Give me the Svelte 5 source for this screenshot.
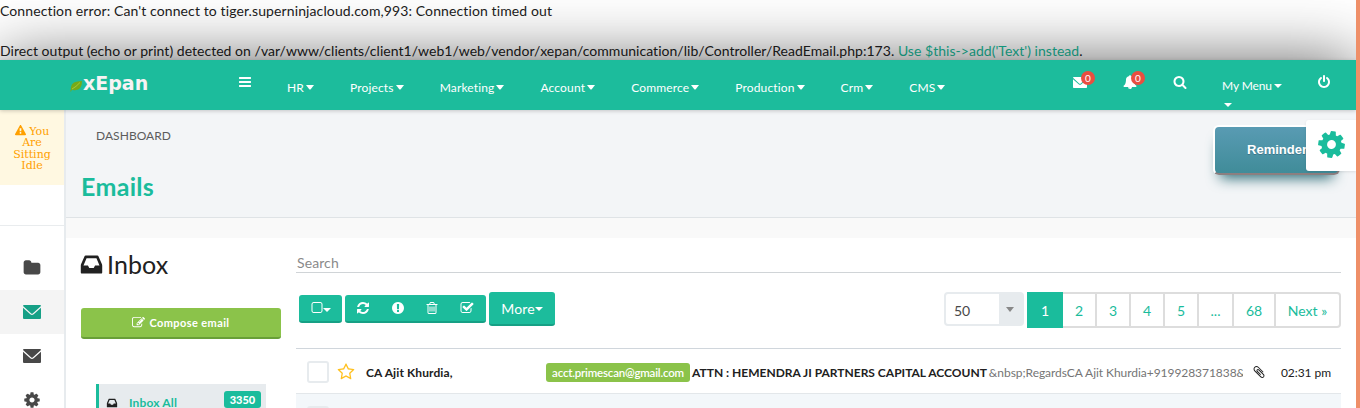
<script>
  const icons = {
    bars: 'M1664 1344v128q0 26-19 45t-45 19h-1408q-26 0-45-19t-19-45v-128q0-26 19-45t45-19h1408q26 0 45 19t19 45zm0-512v128q0 26-19 45t-45 19h-1408q-26 0-45-19t-19-45v-128q0-26 19-45t45-19h1408q26 0 45 19t19 45zm0-512v128q0 26-19 45t-45 19h-1408q-26 0-45-19t-19-45v-128q0-26 19-45t45-19h1408q26 0 45 19t19 45z',
    search: 'M1216 832q0-185-131.5-316.5t-316.5-131.5-316.5 131.5-131.5 316.5 131.5 316.5 316.5 131.5 316.5-131.5 131.5-316.5zm512 832q0 52-38 90t-90 38q-54 0-90-38l-343-342q-179 124-399 124-143 0-273.5-55.5t-225-150-150-225-55.5-273.5 55.5-273.5 150-225 225-150 273.5-55.5 273.5 55.5 225 150 150 225 55.5 273.5q0 220-124 399l343 343q37 37 37 90z',
    power: 'M1664 896q0 156-61 298t-164 245-245 164-298 61-298-61-245-164-164-245-61-298q0-182 80.5-343t226.5-270q43-32 95.5-25t83.5 50q32 42 24.5 94.5t-49.5 84.5q-98 74-151.5 181t-53.5 228q0 104 40.5 198.5t109.5 163.5 163.5 109.5 198.5 40.5 198.5-40.5 163.5-109.5 109.5-163.5 40.5-198.5q0-121-53.5-228t-151.5-181q-42-32-49.5-84.5t24.5-94.5q31-43 84-50t95 25q146 109 226.5 270t80.5 343zm-640-768v640q0 52-38 90t-90 38-90-38-38-90v-640q0-52 38-90t90-38 90 38 38 90z',
    cog: 'M1152 896q0-106-75-181t-181-75-181 75-75 181 75 181 181 75 181-75 75-181zm512-109v222q0 12-8 23t-20 13l-185 28q-19 54-39 91 35 50 107 138 10 12 10 25t-9 23q-27 37-99 108t-94 71q-12 0-26-9l-138-108q-44 23-91 38-16 136-29 186-7 28-36 28h-222q-14 0-24.5-8.5t-11.5-21.5l-28-184q-49-16-90-37l-141 107q-10 9-25 9-14 0-25-11-126-114-165-168-7-10-7-23 0-12 8-23 15-21 51-66.500t54-70.500q-27-50-41-99l-183-27q-13-2-21-12.500t-8-23.500v-222q0-12 8-23t19-13l186-28q14-46 39-92-40-57-107-138-10-12-10-24 0-10 9-23 26-36 98.500-107.500t94.500-71.500q13 0 26 10l138 107q44-23 91-38 16-136 29-186 7-28 36-28h222q14 0 24.500 8.500t11.500 21.500l28 184q49 16 90 37l142-107q9-9 24-9 13 0 25 10 129 119 165 170 7 8 7 22 0 12-8 23-15 21-51 66.500t-54 70.500q26 50 41 98l183 28q13 2 21 12.500t8 23.500z',
    refresh: 'M1639 1056q0 5-1 7-64 268-268 434.500t-478 166.500q-146 0-282.500-55t-243.500-157l-129 129q-19 19-45 19t-45-19-19-45v-448q0-26 19-45t45-19h448q26 0 45 19t19 45-19 45l-137 137q71 66 161 102t187 36q134 0 250-65t186-179q11-17 53-117 8-23 30-23h192q13 0 22.500 9.500t9.500 22.500zm25-800v448q0 26-19 45t-45 19h-448q-26 0-45-19t-19-45 19-45l138-138q-148-137-349-137-134 0-250 65t-186 179q-11 17-53 117-8 23-30 23h-199q-13 0-22.500-9.500t-9.500-22.500v-7q65-268 270-434.500t480-166.500q146 0 284 55.500t245 156.500l130-129q19-19 45-19t45 19 19 45z',
    alert: 'M896 128q209 0 385.500 103t279.500 279.500 103 385.500-103 385.500-279.500 279.500-385.500 103-385.500-103-279.500-279.500-103-385.500 103-385.500 279.500-279.500 385.500-103zm128 1247v-190q0-14-9-23.500t-22-9.500h-192q-13 0-23 10t-10 23v190q0 13 10 23t23 10h192q13 0 22-9.500t9-23.500zm-2-344l18-621q0-12-10-18-10-8-24-8h-220q-14 0-24 8-10 6-10 18l17 621q0 10 10 17.500t24 7.500h185q14 0 23.500-7.500t10.500-17.500z',
    trash: 'M704 736v576q0 14-9 23t-23 9h-64q-14 0-23-9t-9-23v-576q0-14 9-23t23-9h64q14 0 23 9t9 23zm256 0v576q0 14-9 23t-23 9h-64q-14 0-23-9t-9-23v-576q0-14 9-23t23-9h64q14 0 23 9t9 23zm256 0v576q0 14-9 23t-23 9h-64q-14 0-23-9t-9-23v-576q0-14 9-23t23-9h64q14 0 23 9t9 23zm128 724v-948h-896v948q0 22 7 40.500t14.500 27 10.500 8.500h832q3 0 10.500-8.500t14.500-27 7-40.500zm-672-1076h448l-48-117q-7-9-17-11h-317q-10 2-17 11zm928 32v64q0 14-9 23t-23 9h-96v948q0 83-47 143.500t-113 60.500h-832q-66 0-113-58.500t-47-141.500v-952h-96q-14 0-23-9t-9-23v-64q0-14 9-23t23-9h309l70-167q15-37 54-63t79-26h320q40 0 79 26t54 63l70 167h309q14 0 23 9t9 23z',
    check: 'M1472 930v318q0 119-84.500 203.500t-203.500 84.500h-832q-119 0-203.500-84.500t-84.500-203.500v-832q0-119 84.500-203.500t203.500-84.500h832q63 0 117 25 15 7 18 23 3 17-9 29l-49 49q-10 10-23 10-3 0-9-2-23-6-45-6h-832q-66 0-113 47t-47 113v832q0 66 47 113t113 47h832q66 0 113-47t47-113v-254q0-13 9-22l64-64q10-10 23-10 6 0 12 3 20 8 20 29zm231-489l-814 814q-24 24-57 24t-57-24l-430-430q-24-24-24-57t24-57l110-110q24-24 57-24t57 24l263 263 647-647q24-24 57-24t57 24l110 110q24 24 24 57t-24 57z',
    square: 'M1312 256h-832q-66 0-113 47t-47 113v832q0 66 47 113t113 47h832q66 0 113-47t47-113v-832q0-66-47-113t-113-47zm288 160v832q0 119-84.500 203.500t-203.500 84.500h-832q-119 0-203.500-84.500t-84.500-203.500v-832q0-119 84.500-203.500t203.500-84.500h832q119 0 203.500 84.500t84.500 203.500z',
    bell: 'M912 1696q0-16-16-16-59 0-101.500-42.500t-42.500-101.500q0-16-16-16t-16 16q0 73 51.500 124.500t124.500 51.500q16 0 16-16zm816-288q0 52-38 90t-90 38h-448q0 106-75 181t-181 75-181-75-75-181h-448q-52 0-90-38t-38-90q50-42 91-88t85-119.500 74.500-158.500 50-206 19.500-260q0-152 117-282.500t307-158.500q-8-19-8-39 0-40 28-68t68-28 68 28 28 68q0 20-8 39 190 28 307 158.500t117 282.500q0 139 19.500 260t50 206 74.500 158.500 85 119.500 91 88z',
    star: 'M1201 1004l306-297-422-62-189-382-189 382-422 62 306 297-73 421 378-199 377 199zm527-357q0 22-26 48l-363 354 86 500q1 7 1 20 0 50-41 50-19 0-40-12l-449-236-449 236q-22 12-40 12-21 0-31.500-14.500t-10.500-35.500q0-6 2-20l86-500-364-354q-25-27-25-48 0-37 56-46l502-73 225-455q19-41 49-41t49 41l225 455 502 73q56 9 56 46z',
    inbox: 'M1151 960h316q-1-3-2.500-8t-2.500-8l-212-496h-708l-212 496q-1 2-2.500 8t-2.500 8h316l95 192h320zm513 30v482q0 26-19 45t-45 19h-1408q-26 0-45-19t-19-45v-482q0-62 25-123l238-552q10-25 36.500-42t52.500-17h832q26 0 52.500 17t36.500 42l238 552q25 61 25 123z',
    clip: 'M1596 1385q0 117-79 196t-196 79q-135 0-235-100l-777-776q-113-115-113-271 0-159 110-270t269-111q158 0 273 113l605 606q10 10 10 22 0 16-30.500 46.500t-46.500 30.500q-13 0-23-10l-606-607q-79-77-181-77-106 0-179 75t-73 181q0 105 76 181l776 777q63 63 145 63 64 0 106-42t42-106q0-82-63-145l-581-581q-26-24-60-24-29 0-48 19t-19 48q0 32 25 59l410 410q10 10 10 22 0 16-31 47t-47 31q-12 0-22-10l-410-410q-63-61-63-149 0-82 57-139t139-57q88 0 149 63l581 581q100 98 100 235z',
    edit: 'M888 1184l116-116-152-152-116 116v56h96v96h56zm440-720q-16-16-33 1l-350 350q-17 17-1 33t33-1l350-350q17-17 1-33zm80 594v190q0 119-84.500 203.500t-203.500 84.500h-832q-119 0-203.500-84.500t-84.500-203.500v-832q0-119 84.500-203.500t203.500-84.500h832q63 0 117 25 15 7 18 23 3 17-9 29l-49 49q-14 14-32 8-23-6-45-6h-832q-66 0-113 47t-47 113v832q0 66 47 113t113 47h832q66 0 113-47t47-113v-126q0-13 9-22l64-64q15-15 35-7t20 29zm-96-738l288 288-672 672h-288v-288zm444 132l-92 92-288-288 92-92q28-28 68-28t68 28l152 152q28 28 28 68t-28 68z',
    warning: 'M1024 1375v-190q0-14-9.500-23.500t-22.500-9.500h-192q-13 0-22.500 9.500t-9.500 23.500v190q0 14 9.500 23.500t22.500 9.500h192q13 0 22.500-9.500t9.500-23.500zm-2-374l18-459q0-12-10-19-13-11-24-11h-220q-11 0-24 11-10 7-10 21l17 457q0 10 10 16.500t24 6.500h185q14 0 23.500-6.500t10.500-16.500zm-14-934l768 1408q35 63-2 126-17 29-46.500 46t-63.500 17h-1536q-34 0-63.500-17t-46.500-46q-37-63-2-126l768-1408q17-31 47-49t65-18 65 18 47 49z',
    folder: 'M1728 608v704q0 92-66 158t-158 66h-1216q-92 0-158-66t-66-158v-960q0-92 66-158t158-66h320q92 0 158 66t66 158v32h672q92 0 158 66t66 158z'
  };
  const menu = ['HR', 'Projects', 'Marketing', 'Account', 'Commerce', 'Production', 'Crm', 'CMS'];
  const pages = [['1', 36], ['2', 34], ['3', 34], ['4', 34], ['5', 34], ['...', 35], ['68', 42], ['Next »', 65]];
</script>

{#snippet icon(name, size)}
  <svg class="icon" width={size} height={size} viewBox="0 0 1792 1792"><path d={icons[name]} /></svg>
{/snippet}

{#snippet mail(w, h)}
  <svg class="icon" width={w} height={h} viewBox="0 0 18 14">
    <path d="M1 0h16q1 0 1 1L9.700 8.500Q9 9 8.300 8.500L0 1Q0 0 1 0zM0 2.700l7.300 6.500q1.700 1.400 3.400 0L18 2.700V13q0 1-1 1H1q-1 0-1-1z" />
  </svg>
{/snippet}

<div class="screen">
  <div class="main">
    <div class="notice">
      <p class="error">Connection error: Can't connect to tiger.superninjacloud.com,993: Connection timed out</p>
      <p>Direct output (echo or print) detected on /var/www/clients/client1/web1/web/vendor/xepan/communication/lib/Controller/ReadEmail.php:173. <a href="#add">Use $this-&gt;add('Text') instead</a>.</p>
    </div>

    <div class="app">
      <header>
        <div class="logo">
          <svg width="13" height="12" viewBox="0 0 13 12">
            <path d="M.3 11.500Q1 9 1 7Q1.500 1 12 1Q12 10 5 10.300Q3 10.500 2 9.500L1 11.500z" fill="#76aa18" />
            <path d="M2 9Q6 7 10 2.500" stroke="#a6c83a" stroke-width="1" fill="none" />
          </svg>
          <span>xEpan</span>
        </div>
        <div class="burger">{@render icon('bars', 14)}</div>
        <nav>
          {#each menu as m}
            <a href="#nav">{m}<svg class="caret" width="8" height="5" viewBox="0 0 8 5"><path d="M0 0h8L4.500 4.500h-1z" /></svg></a>
          {/each}
        </nav>
        <div class="tools">
          <div class="tool mailtool">{@render mail(14, 11)}<b>0</b></div>
          <div class="tool belltool">{@render icon('bell', 14)}<b>0</b></div>
          <div class="tool searchtool">{@render icon('search', 14)}</div>
          <div class="mymenu">
            <div>My Menu <svg width="8" height="4" viewBox="0 0 8 4"><path d="M0 0h8L4 4z" /></svg></div>
            <svg class="second" width="8" height="4" viewBox="0 0 8 4"><path d="M0 0h8L4 4z" /></svg>
          </div>
          <div class="tool">{@render icon('power', 14)}</div>
        </div>
      </header>

      <div class="body">
        <aside>
          <div class="idle">{@render icon('warning', 11)} You<br />Are<br />Sitting<br />Idle</div>
          <div class="gap"></div>
          <div class="side">{@render icon('folder', 18)}</div>
          <div class="side on">{@render mail(18, 14)}</div>
          <div class="side">{@render mail(18, 14)}</div>
          <div class="side">{@render icon('cog', 18)}</div>
        </aside>

        <div class="page">
          <div class="head">
            <div class="crumb">DASHBOARD</div>
            <h1>Emails</h1>
            <button class="reminder">Reminder</button>
            <div class="config">
              <svg width="31" height="31" viewBox="0 0 1792 1792"><path transform="rotate(8 896 896)" d={icons.cog} /></svg>
            </div>
          </div>

          <div class="content">
            <div class="left">
              <h2>{@render icon('inbox', 25)}<span>Inbox</span></h2>
              <button class="compose">{@render icon('edit', 13)}<span>Compose email</span></button>
              <div class="box">
                {@render icon('inbox', 12)}<span>Inbox All</span><b>3350</b>
              </div>
            </div>

            <div class="right">
              <div class="search">Search</div>
              <div class="bar">
                <button class="btn select">{@render icon('square', 14)}<svg width="8" height="4" viewBox="0 0 8 4"><path d="M0 0h8L4 4z" /></svg></button>
                <div class="btn group">
                  {@render icon('refresh', 14)}{@render icon('alert', 14)}{@render icon('trash', 14)}{@render icon('check', 14)}
                </div>
                <button class="btn more">More<svg width="8" height="4" viewBox="0 0 8 4"><path d="M0 0h8L4 4z" /></svg></button>
                <div class="count"><span>50</span><i><svg width="8" height="5" viewBox="0 0 8 5"><path d="M0 0h8L4 5z" /></svg></i></div>
                <div class="pager">
                  {#each pages as [label, w], i}
                    <a href="#page" class:active={i === 0} style="width:{w}px">{label}</a>
                  {/each}
                </div>
              </div>
              <div class="row">
                <span class="box-check"></span>
                <span class="star">{@render icon('star', 18)}</span>
                <strong class="from">CA Ajit Khurdia,</strong>
                <div class="subject"><em>acct.primescan@gmail.com</em><strong>ATTN : HEMENDRA JI PARTNERS CAPITAL ACCOUNT</strong><span>&amp;nbsp;RegardsCA Ajit Khurdia+919928371838&amp;nbsp;</span></div>
                <span class="clip">{@render icon('clip', 14)}</span>
                <time>02:31 pm</time>
              </div>
              <div class="row alt"><span class="box-check"></span></div>
            </div>
          </div>
        </div>
      </div>
    </div>
  </div>
</div>

<style>
  :global(body) { overflow: hidden; }
  .screen { box-sizing: border-box; width: 1360px; height: 408px; overflow: hidden; border-right: 4px solid #ef8f68; background: #fff; font: 14px/20px Lato, sans-serif; color: #212121; font-variant-ligatures: none; }
  .screen :global(*) { box-sizing: border-box; }
  .main { width: 1356px; height: 408px; overflow: hidden; }
  svg { display: block; fill: currentColor; flex: none; }
  a { color: #1abc9c; text-decoration: none; }
  button { font: inherit; border: 0; padding: 0; color: #fff; }
  .notice { height: 60px; white-space: nowrap; }
  .notice p { margin: 0 0 20px; height: 20px; padding-top: 1px; letter-spacing: .033px; }
  .notice .error { letter-spacing: .11px; }
  .app { height: 600px; box-shadow: 0 0 60px rgba(0, 0, 0, .6); position: relative; background: #fff; }
  header { position: relative; z-index: 2; height: 50px; background: #1cbc9c; color: #fff; display: flex; box-shadow: 0 1px 4px rgba(0, 0, 0, .2); font-size: 12px; }
  .logo { width: 238px; padding: 11px 0 0 70px; display: flex; }
  .logo svg { margin: 9px 0 0; }
  .logo span { font: bold 19px/24px "DejaVu Sans", sans-serif; color: #f7f3f4; }
  .burger { width: 49px; padding-top: 15px; }
  nav { display: flex; gap: 36px; padding-top: 18px; }
  nav a { color: #fff; display: flex; align-items: flex-start; gap: 2px; white-space: nowrap; letter-spacing: .15px; }
  .caret { margin-top: 7px; }
  .tools { margin-left: auto; display: flex; padding-right: 25px; }
  .tool { position: relative; padding-top: 15px; }
  .mailtool { width: 50px; padding-top: 17px; }
  .belltool { width: 50px; }
  .searchtool { width: 49px; }
  .tool b { position: absolute; left: 8px; top: 11px; width: 14px; height: 14px; border-radius: 7px; background: #e84e40; font: 10px/15px Lato, sans-serif; text-align: center; }
  .mymenu { width: 95px; padding-top: 16px; }
  .mymenu div { display: flex; align-items: center; gap: 2px; white-space: nowrap; letter-spacing: -.1px; }
  .mymenu .second { margin: 7px 0 0 2px; }
  .body { display: flex; }
  aside { width: 66px; border-right: 2px solid #e7ebee; flex: none; height: 500px; }
  .idle { height: 75px; padding-top: 15px; background: #fff8e1; color: #ffa000; font: 11px/11.300px "DejaVu Serif", serif; text-align: center; }
  .idle :global(svg) { display: inline-block; vertical-align: -1px; }
  .gap { height: 41px; border-bottom: 1px solid #e9ecee; margin-bottom: 20px; }
  .side { height: 44px; display: flex; align-items: center; justify-content: center; color: #484848; }
  .side.on { background: #f4f4f4; color: #16a086; }
  .page { flex: 1; min-width: 0; }
  .head { position: relative; height: 108px; background: #f3f5f7; border-bottom: 1px solid #dfe3e6; padding: 16px 15px 0; }
  .crumb { padding-left: 15px; font-size: 12px; color: #5c5c5c; letter-spacing: .05px; }
  h1 { margin: 25px 0 0; font: 700 25px/30px Lato, sans-serif; letter-spacing: .3px; color: #1abc9c; }
  .reminder { position: absolute; left: 1147px; top: 15px; width: 127px; height: 50px; border: 2px solid; border-color: #fff #8c7f80 #8c7f80 #fff; border-radius: 6px; background: linear-gradient(#599bb3, #408c99); font: bold 13px/46px "Liberation Sans", sans-serif; text-shadow: 0 1px 0 #3d768a; box-shadow: 0 10px 14px -7px #276873; text-align: center; padding-left: 1px; }
  .config { position: absolute; left: 1240px; top: 10px; width: 50px; height: 51px; background: #fff; border-radius: 3px 0 0 3px; color: #1abc9c; padding: 9px 10px; box-shadow: 0 1px 3px rgba(0, 0, 0, .1); }
  .content { border-top: 20px solid #f9f9f9; display: flex; padding: 0 15px; }
  .left { width: 215px; flex: none; }
  h2 { margin: 11px 0 0 -2px; font: 25px/30px Lato, sans-serif; letter-spacing: .1px; display: flex; align-items: center; gap: 3px; }
  .compose { display: flex; width: 200px; height: 31px; margin-top: 29px; align-items: center; justify-content: center; gap: 4px; background: #8bc34a; border-bottom: 2px solid #689f38; border-radius: 3px; font-size: 11px; font-weight: 700; letter-spacing: .4px; }
  .box { display: flex; margin: 45px 0 0 15px; width: 170px; height: 40px; padding-left: 10px; background: #e7ebee; border-left: 3px solid #1abc9c; font-weight: 700; font-size: 12px; align-items: flex-start; }
  .left .box > :global(svg) { margin: 13px 11px 0 -3px; }
  .box span { color: #1abc9c; margin-top: 9px; letter-spacing: .15px; }
  .box b { margin: 7px 5px 0 auto; width: 37px; height: 17px; border-radius: 3px; background: #1abc9c; color: #fff; font-size: 11px; line-height: 17px; text-align: center; }
  .right { flex: 1; min-width: 0; }
  .search { height: 35px; border-bottom: 1px solid #d0d4d7; padding: 15px 0 0 1px; color: #8a8a8a; letter-spacing: .1px; }
  .bar { height: 75px; display: flex; align-items: flex-start; padding: 19px 0 0 3px; }
  .btn { background: #1cbc9c; border-bottom: 2px solid #16a085; border-radius: 3px; color: #fff; height: 28px; margin-top: 3px; display: flex; align-items: center; }
  .select { width: 43px; justify-content: center; padding: 0 1px 1px 0; }
  .select svg:last-child { margin: 4px 0 0 -1px; }
  .group { width: 141px; margin-left: 3px; padding: 0 12px 1px 11px; justify-content: space-between; }
  .more { width: 66px; height: 34px; margin: 0 0 0 3px; justify-content: center; letter-spacing: .1px; padding-top: 1px; }
  .count { margin-left: auto; width: 80px; height: 34px; border: 2px solid #e7ebee; border-radius: 4px; display: flex; color: #484848; line-height: 34px; padding-left: 8px; }
  .count i { margin-left: auto; width: 23px; background: #e7ebee; color: #888; padding: 13px 0 0 7px; }
  .pager { display: flex; margin-left: 3px; }
  .pager a { height: 36px; border: 2px solid #ddd; border-left-width: 0; line-height: 34px; text-align: center; }
  .pager a:last-child { border-radius: 0 4px 4px 0; }
  .pager .active { background: #1abc9c; border-color: #1abc9c; color: #fff; padding-left: 2px; }
  .row { height: 46px; border-top: 1px solid #d0d6dc; display: flex; align-items: center; padding: 1px 10px 0 11px; white-space: nowrap; font-size: 12px; }
  .alt { background: #f3f7fa; border-top-color: #e3e7ea; margin-top: -1px; }
  .box-check { width: 22px; height: 22px; border: 2px solid #e7ebee; border-radius: 3px; background: #fff; flex: none; }
  .star { color: #ffc120; margin-left: 8px; }
  .from { width: 180px; margin-left: 11px; padding-top: 2px; letter-spacing: .1px; }
  .subject { width: 697px; height: 22px; padding-top: 1px; overflow: hidden; display: flex; align-items: center; }
  em { font-style: normal; font-weight: 600; font-size: 11.500px; background: #8bc34a; color: #fff; border-radius: 3px; width: 144px; height: 19px; line-height: 20px; text-align: center; flex: none; margin-right: 2px; letter-spacing: -.2px; }
  .subject span { color: #757575; margin-left: 2px; letter-spacing: -.05px; }
  .subject strong { letter-spacing: 0; }
  .clip { margin-left: 9px; }
  time { margin-left: auto; padding-top: 2px; letter-spacing: -.05px; }
</style>
